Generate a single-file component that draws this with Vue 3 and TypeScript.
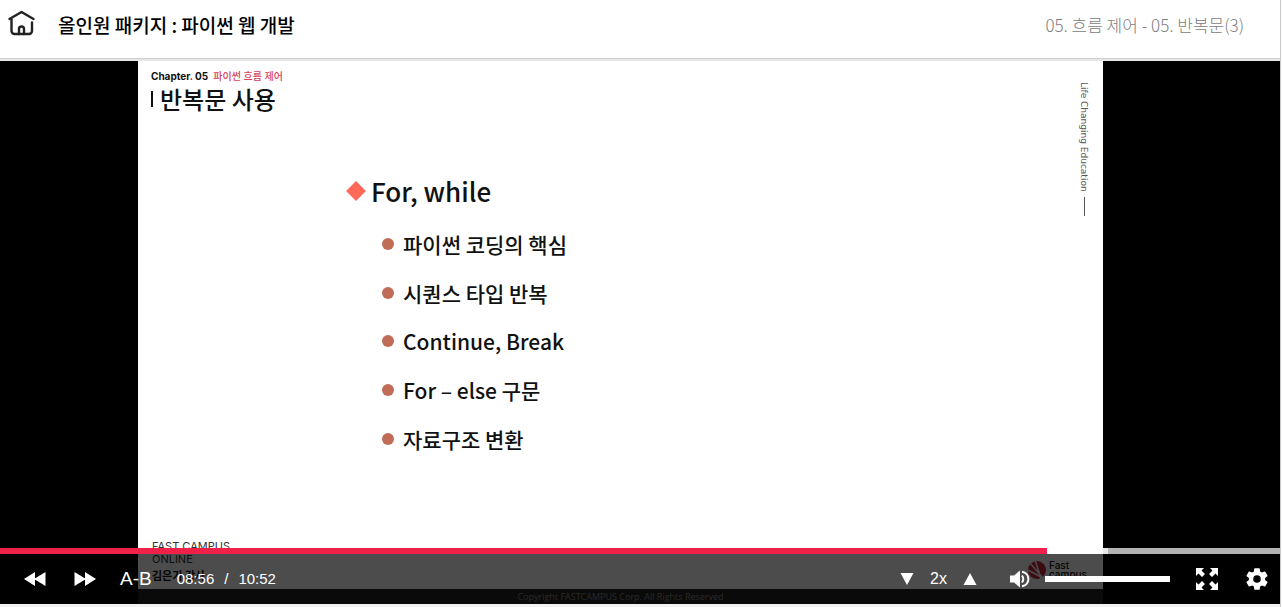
<script setup lang="ts">
import { computed, ref } from 'vue'

const topics: string[] = ['파이썬 코딩의 핵심', '시퀀스 타입 반복', 'Continue, Break', 'For – else 구문', '자료구조 변환']

// Seek values are in thousandths of the running time.
const position = ref(818)
const buffered = 866
const volume = ref(100)
const speed = ref(2)

const seekStyle = computed(() => ({
  '--played': `${position.value / 10}%`,
  '--buffered': `${buffered / 10}%`,
}))
const volumeStyle = computed(() => ({ '--level': `${volume.value}%` }))

function changeSpeed(step: number): void {
  speed.value = Math.min(4, Math.max(0.5, speed.value + step))
}
</script>

<template>
  <div class="page">
    <header class="topbar">
      <a class="home" href="#" aria-label="홈">
        <svg viewBox="0 0 28 26" width="28" height="26" fill="none" stroke="#222" stroke-width="2.400" stroke-linecap="round" stroke-linejoin="round">
          <path d="M1.500 9 13.500 2 25.500 9" />
          <path d="M3.500 9.500V21a3 3 0 0 0 3 3h14.500a3 3 0 0 0 3-3V12.500" />
          <path d="M11 24V19a2.500 2.500 0 0 1 5 0V24" />
        </svg>
      </a>
      <h1 class="course">올인원 패키지 : 파이썬 웹 개발</h1>
      <p class="lesson">05. 흐름 제어 - 05. 반복문(3)</p>
    </header>

    <main class="player">
      <section class="slide">
        <div class="slide-top">
          <div>
            <p class="chapter"><b>Chapter<i>.</i> 05</b><span>파이썬 흐름 제어</span></p>
            <h2 class="slide-title">반복문 사용</h2>
          </div>
          <p class="motto">Life Changing Education</p>
        </div>
        <div class="outline">
          <h3 class="topic">For, while</h3>
          <ul class="points">
            <li v-for="topic in topics" :key="topic">{{ topic }}</li>
          </ul>
        </div>
        <div class="credits">
          <div class="credit-text">
            <p>FAST CAMPUS</p>
            <p>ONLINE</p>
            <p class="teacher">김은기 강사</p>
          </div>
          <div class="brand">
            <svg viewBox="0 0 20 20" width="20" height="20">
              <circle cx="10" cy="10" r="9" fill="#c8233c" />
              <path d="M3 3 16 18M8 0 14 18M1 10 14 17" stroke="#fff" stroke-width="1.500" />
            </svg>
            <p>Fast<br />campus</p>
          </div>
        </div>
        <p class="copyright">Copyright FASTCAMPUS Corp. All Rights Reserved</p>
      </section>

      <div class="controls">
        <input v-model.number="position" class="seek" type="range" min="0" max="1000" aria-label="재생 위치" :style="seekStyle" />
        <div class="bar">
          <button class="skip" type="button" aria-label="뒤로">
            <svg viewBox="0 0 22 14" width="22" height="14" fill="#fff"><path d="M0 7 11 0V14ZM10 7 21.500 0V14Z" /></svg>
          </button>
          <button class="skip" type="button" aria-label="앞으로">
            <svg viewBox="0 0 22 14" width="22" height="14" fill="#fff"><path d="M22 7 11 0V14ZM12 7 .5 0V14Z" /></svg>
          </button>
          <button class="repeat" type="button">A-B</button>
          <p class="time"><span>08:56</span><span>/</span><span>10:52</span></p>
          <div class="speed">
            <button type="button" aria-label="느리게" @click="changeSpeed(-0.5)">
              <svg viewBox="0 0 14 12" width="14" height="12" fill="#fff"><path d="M.5 0H13.500L7 12Z" /></svg>
            </button>
            <output>{{ speed }}x</output>
            <button type="button" aria-label="빠르게" @click="changeSpeed(0.5)">
              <svg viewBox="0 0 14 12" width="14" height="12" fill="#fff"><path d="M.5 12H13.500L7 0Z" /></svg>
            </button>
          </div>
          <div class="sound">
            <button type="button" aria-label="음소거">
              <svg viewBox="0 0 20 18" width="20" height="18">
                <path d="M0 5.500H4L10 .5V17.500L4 12.500H0Z" fill="#fff" />
                <path d="M12 5.500Q14.500 9 12 12.500M12 1.800C20.500 3 20.500 15 12 16.200" fill="none" stroke="#fff" stroke-width="2" />
              </svg>
            </button>
            <input v-model.number="volume" class="volume" type="range" min="0" max="100" aria-label="음량" :style="volumeStyle" />
          </div>
          <button class="fullscreen" type="button" aria-label="전체 화면">
            <svg viewBox="0 0 22 22" width="22" height="22" fill="#fff">
              <path d="M0 0H8L5.500 2.500 9 6 6 9 2.500 5.500 0 8Z" />
              <path d="M22 0V8L19.500 5.500 16 9 13 6 16.500 2.500 14 0Z" />
              <path d="M22 22H14L16.500 19.500 13 16 16 13 19.500 16.500 22 14Z" />
              <path d="M0 22V14L2.500 16.500 6 13 9 16 5.500 19.500 8 22Z" />
            </svg>
          </button>
          <button type="button" aria-label="설정">
            <svg viewBox="0 0 24 24" width="26" height="26" fill="#fff">
              <path d="M19.430 12.980c.04-.32.07-.64.07-.98s-.03-.66-.07-.98l2.110-1.650c.19-.15.24-.42.12-.64l-2-3.460c-.12-.22-.39-.3-.61-.22l-2.490 1c-.52-.4-1.080-.73-1.690-.98l-.38-2.650C14.460 2.180 14.250 2 14 2h-4c-.25 0-.46.18-.49.42l-.38 2.650c-.61.25-1.170.59-1.690.98l-2.490-1c-.23-.09-.49 0-.61.22l-2 3.460c-.13.22-.07.49.12.64l2.110 1.650c-.04.32-.07.65-.07.98s.03.66.07.98l-2.110 1.650c-.19.15-.24.42-.12.64l2 3.460c.12.22.39.3.61.22l2.490-1c.52.4 1.080.73 1.690.98l.38 2.650c.03.24.24.42.49.42h4c.25 0 .46-.18.49-.42l.38-2.650c.61-.25 1.170-.59 1.690-.98l2.490 1c.23.09.49 0 .61-.22l2-3.460c.12-.22.07-.49-.12-.64l-2.110-1.650zM12 15.500A3.500 3.500 0 1 1 12 8.500a3.500 3.500 0 0 1 0 7z" />
            </svg>
          </button>
        </div>
      </div>
    </main>
  </div>
</template>

<style>
body {
  margin: 0;
}
</style>

<style scoped>
.page {
  box-sizing: border-box;
  display: flex;
  flex-direction: column;
  min-height: 100vh;
  margin-right: 1px;
  padding-bottom: 3px;
  border-right: 1px solid #c8c8cd;
  background: #f2f2f2;
  font-family: 'Noto Sans CJK KR', sans-serif;
}

p,
h1,
h2,
h3,
ul {
  margin: 0;
  padding: 0;
}

.topbar {
  box-sizing: border-box;
  display: flex;
  align-items: center;
  height: 61px;
  padding: 0 36px 10px 8px;
  border-bottom: 2px solid #e6e6e6;
  background: #fff;
  box-shadow: inset 0 -1px #cfcfd2;
}

.home {
  display: flex;
  margin: 0 22px 4px 0;
}

.course {
  flex: 1;
  font-size: 19px;
  font-weight: 500;
  line-height: 26px;
  color: #000;
}

.lesson {
  font-size: 17px;
  font-weight: 300;
  line-height: 24px;
  color: #808080;
}

.player {
  position: relative;
  flex: 1;
  display: grid;
  grid-template-columns: 138fr 965fr 177fr;
  background: #000;
}

.slide {
  grid-column: 2;
  display: flex;
  flex-direction: column;
  background: #fff;
  color: #111;
}

.slide-top {
  display: flex;
  justify-content: space-between;
  height: 105px;
  padding: 8px 13px 0;
}

.chapter {
  display: flex;
  gap: 5px;
  font: 500 10px/14px Inter, 'Noto Sans CJK KR', sans-serif;
}

.chapter i {
  font-style: normal;
  color: #c8233c;
}

.chapter span {
  color: #d8435a;
}

.slide-title {
  display: flex;
  align-items: center;
  gap: 7px;
  font-size: 24px;
  font-weight: 500;
  line-height: 32px;
}

.slide-title::before {
  width: 2px;
  height: 16px;
  background: #111;
  content: '';
}

.motto {
  display: flex;
  align-items: center;
  gap: 5px;
  padding-top: 13px;
  font: 400 9px/12px 'DejaVu Sans', sans-serif;
  white-space: nowrap;
  writing-mode: vertical-rl;
  color: #555;
}

.motto::after {
  flex: none;
  width: 1px;
  height: 19px;
  background: #555;
  content: '';
}

.outline {
  flex: 1;
  padding-left: 208px;
}

.topic {
  display: flex;
  align-items: center;
  gap: 8px;
  font-size: 26px;
  font-weight: 500;
  line-height: 34px;
}

.topic::before {
  width: 14px;
  height: 14px;
  margin-left: 3px;
  background: #ff6a58;
  transform: rotate(45deg);
  content: '';
}

.points {
  display: grid;
  grid-auto-rows: 1fr;
  height: 243px;
  padding: 12px 0 0 36px;
  list-style: none;
}

.points li {
  display: flex;
  align-items: center;
  gap: 9px;
  font-size: 21px;
  font-weight: 500;
}

.points li::before {
  width: 12px;
  height: 12px;
  border-radius: 50%;
  background: #c06c56;
  content: '';
}

.credits {
  display: flex;
  align-items: flex-end;
  justify-content: space-between;
  padding: 0 16px 3px 14px;
}

.credit-text {
  font: 400 11px/13px Inter, 'Noto Sans CJK KR', sans-serif;
  color: #333;
}

.credit-text .teacher {
  font-weight: 700;
  line-height: 20px;
  color: #111;
}

.brand {
  display: flex;
  align-items: center;
  gap: 2px;
  padding-bottom: 6px;
  font: 500 10px/9px Inter, sans-serif;
}

.copyright {
  height: 15px;
  background: #222;
  font: 400 9px/16px 'Open Sans', sans-serif;
  text-align: center;
  color: #888;
}

.controls {
  position: absolute;
  right: 0;
  bottom: 0;
  left: 0;
}

.seek,
.volume {
  display: block;
  height: 6px;
  margin: 0;
  border-radius: 0;
  appearance: none;
  cursor: pointer;
}

.seek {
  width: 100%;
  background:
    linear-gradient(to right, #ef2149 var(--played), rgba(255, 255, 255, 0.7) var(--played), rgba(255, 255, 255, 0.7) var(--buffered), transparent var(--buffered)),
    rgba(255, 255, 255, 0.7);
}

.volume {
  width: 125px;
  background: linear-gradient(to right, #fff var(--level), #777 var(--level));
}

.seek::-webkit-slider-thumb,
.volume::-webkit-slider-thumb {
  width: 0;
  height: 0;
  appearance: none;
}

.bar {
  box-sizing: border-box;
  display: flex;
  align-items: center;
  height: 50px;
  padding: 0 10px 0 24px;
  background: rgba(0, 0, 0, 0.7);
  font: 400 16px/24px 'Liberation Sans', Arial, sans-serif;
  color: #fff;
}

.bar button {
  display: flex;
  padding: 0;
  border: 0;
  background: none;
  color: inherit;
  cursor: pointer;
}

.bar .skip {
  margin-right: 28px;
}

.bar .repeat {
  margin: 0 25px 0 -4px;
  font: 400 19px/24px 'Liberation Sans', Arial, sans-serif;
}

.time {
  display: flex;
  flex: 1;
  gap: 10px;
  font-size: 15px;
}

.speed {
  display: flex;
  align-items: center;
  gap: 16px;
  margin-right: 33px;
}

.sound {
  display: flex;
  align-items: center;
  gap: 15px;
}

.bar .fullscreen {
  margin: 0 26px;
}
</style>
